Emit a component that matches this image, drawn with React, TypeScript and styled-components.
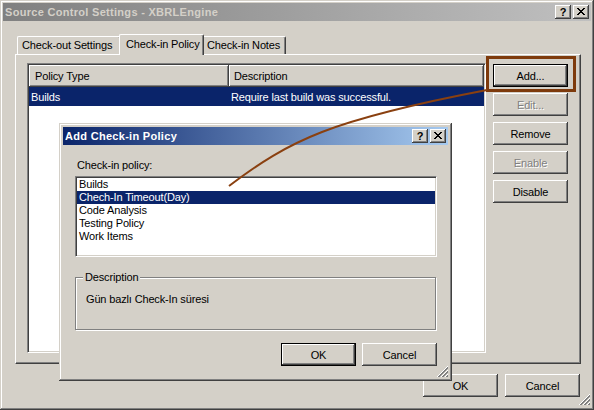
import React from "react";
import styled, { createGlobalStyle, css } from "styled-components";

const Global = createGlobalStyle`
  html, body { margin: 0; padding: 0; background: #d4d0c8; }
  body { font-family: "Liberation Sans", Arial, sans-serif; font-size: 11px; letter-spacing: -0.15px; color: #000; }
  * { box-sizing: border-box; }
`;

const raised = css`
  background: #d4d0c8;
  box-shadow: inset -1px -1px #404040, inset 1px 1px #ffffff, inset -2px -2px #808080;
`;

const sunken = css`
  border: 1px solid;
  border-color: #808080 #ffffff #ffffff #808080;
  box-shadow: inset 1px 1px #404040, inset -1px -1px #d4d0c8;
  background: #ffffff;
`;

const Root = styled.div`
  position: relative;
  width: 594px;
  height: 410px;
  overflow: hidden;
`;

const Window = styled.div`
  width: 594px;
  height: 410px;
  padding: 3px;
  background: #d4d0c8;
  display: flex;
  flex-direction: column;
  box-shadow: inset -1px -1px #404040, inset 1px 1px #d4d0c8, inset -2px -2px #808080, inset 2px 2px #ffffff;
`;

const TitleBar = styled.div<{ $active?: boolean }>`
  height: 18px;
  flex: none;
  display: flex;
  align-items: center;
  padding: 0 2px 0 2px;
  font-weight: bold;
  font-size: 11px;
  letter-spacing: 0.3px;
  color: ${(p) => (p.$active ? "#ffffff" : "#d4d0c8")};
  background: ${(p) =>
    p.$active
      ? "linear-gradient(to right, #0a246a, #a6caf0)"
      : "linear-gradient(to right, #808080, #c0c0c0)"};
`;

const TitleText = styled.div`
  flex: 1;
  white-space: nowrap;
  overflow: hidden;
`;

const CaptionButtons = styled.div`
  display: flex;
  gap: 2px;
`;

const CaptionButton = styled.div`
  ${raised};
  width: 16px;
  height: 14px;
  display: flex;
  align-items: center;
  justify-content: center;
  color: #000;
  font-weight: bold;
  font-size: 11px;
  letter-spacing: 0;
  line-height: 14px;
  padding-bottom: 1px;
`;

const Body = styled.div`
  flex: 1;
  display: flex;
  flex-direction: column;
  padding: 13px 10px 0 12px;
`;

const TabStrip = styled.div`
  display: flex;
  align-items: flex-end;
  height: 21px;
  padding-left: 2px;
  position: relative;
  z-index: 1;
  margin-bottom: -1px;
`;

const Tab = styled.div<{ $selected?: boolean; $width: number }>`
  background: #d4d0c8;
  width: ${(p) => p.$width}px;
  height: ${(p) => (p.$selected ? "21px" : "18px")};
  margin: ${(p) => (p.$selected ? "0 -2px" : "0 0 1px 0")};
  position: relative;
  z-index: ${(p) => (p.$selected ? 2 : 1)};
  padding: ${(p) => (p.$selected ? "2px 0 0 6px" : "1px 0 0 4px")};
  border-top: 1px solid #ffffff;
  border-left: 1px solid #ffffff;
  border-right: 1px solid #404040;
  border-top-left-radius: 2px;
  border-top-right-radius: 2px;
  box-shadow: inset -1px 0 #808080;
  white-space: nowrap;
  overflow: hidden;
  line-height: 14px;
`;

const TabPanel = styled.div`
  height: 310px;
  flex: none;
  border: 1px solid;
  border-color: #ffffff #404040 #404040 #ffffff;
  box-shadow: inset -1px -1px #808080;
  display: flex;
  gap: 7px;
  padding: 8px 12px 10px 11px;
`;

const ListView = styled.div`
  ${sunken};
  flex: 1;
  padding: 1px;
  display: flex;
  flex-direction: column;
`;

const ListRow = styled.div<{ $header?: boolean; $selected?: boolean }>`
  display: grid;
  grid-template-columns: 200px 1fr;
  height: ${(p) => (p.$header ? "22px" : "19px")};
  background: ${(p) => (p.$selected ? "#0a246a" : "transparent")};
  color: ${(p) => (p.$selected ? "#ffffff" : "#000000")};
`;

const HeaderCell = styled.div<{ $pad: number }>`
  ${raised};
  display: flex;
  align-items: center;
  padding-left: ${(p) => p.$pad}px;
  white-space: nowrap;
  overflow: hidden;
`;

const Cell = styled.div`
  display: flex;
  align-items: center;
  padding-left: 2px;
  white-space: nowrap;
  overflow: hidden;
`;

const ButtonColumn = styled.div`
  width: 75px;
  flex: none;
  display: flex;
  flex-direction: column;
  gap: 6px;
  padding-top: 1px;
`;

const Button = styled.button<{ $default?: boolean }>`
  width: 75px;
  height: 23px;
  flex: none;
  border: none;
  padding: 0;
  font-family: "Liberation Sans", Arial, sans-serif;
  font-size: 11px;
  letter-spacing: -0.15px;
  color: #000;
  background: #d4d0c8;
  box-shadow: ${(p) =>
    p.$default
      ? "inset 0 0 0 1px #000000, inset -2px -2px #404040, inset 2px 2px #ffffff, inset -3px -3px #808080"
      : "inset -1px -1px #404040, inset 1px 1px #ffffff, inset -2px -2px #808080"};
  &:disabled {
    color: #808080;
    text-shadow: 1px 1px #ffffff;
  }
`;

const Annotated = styled.div`
  position: relative;
  display: flex;
`;

const Highlight = styled.div`
  position: absolute;
  left: -7px;
  top: -8px;
  right: -8px;
  bottom: -5px;
  border: 3px solid #7e3a0c;
  pointer-events: none;
`;

const Footer = styled.div`
  display: flex;
  justify-content: flex-end;
  gap: 7px;
  margin-top: 10px;
  padding-right: 1px;
`;

const GripBox = styled.div<{ $right: number; $bottom: number }>`
  position: absolute;
  right: ${(p) => p.$right}px;
  bottom: ${(p) => p.$bottom}px;
  width: 13px;
  height: 13px;
`;

const Dialog = styled.div`
  position: absolute;
  left: 59px;
  top: 123px;
  width: 393px;
  height: 258px;
  padding: 4px;
  background: #d4d0c8;
  display: flex;
  flex-direction: column;
  box-shadow: inset -1px -1px #404040, inset 1px 1px #d4d0c8, inset -2px -2px #808080, inset 2px 2px #ffffff;
  z-index: 5;
`;

const DialogBody = styled.div`
  flex: 1;
  display: flex;
  flex-direction: column;
  padding: 13px 11px 0 12px;
`;

const Label = styled.div`
  line-height: 14px;
  padding-left: 2px;
`;

const ListBox = styled.div`
  ${sunken};
  margin-top: 4px;
  height: 81px;
  padding: 1px;
`;

const ListItem = styled.div<{ $selected?: boolean }>`
  height: 13px;
  line-height: 13px;
  padding-left: 2px;
  white-space: nowrap;
  background: ${(p) => (p.$selected ? "#0a246a" : "transparent")};
  color: ${(p) => (p.$selected ? "#ffffff" : "#000000")};
`;

const GroupBox = styled.div`
  position: relative;
  margin-top: 20px;
  margin-right: 1px;
  height: 53px;
  border: 1px solid #808080;
  box-shadow: inset 1px 1px #ffffff, 1px 1px #ffffff;
  padding: 15px 10px 0 10px;
  line-height: 13px;
`;

const Legend = styled.div`
  position: absolute;
  left: 7px;
  top: -7px;
  padding: 0 2px;
  line-height: 13px;
  background: #d4d0c8;
`;

const DialogFooter = styled.div`
  display: flex;
  justify-content: flex-end;
  gap: 6px;
  margin-top: 13px;
`;

const Overlay = styled.svg`
  position: absolute;
  left: 0;
  top: 0;
  width: 594px;
  height: 410px;
  pointer-events: none;
  z-index: 10;
`;

const CloseGlyph = () => (
  <svg width="8" height="7" viewBox="0 0 8 7" shapeRendering="crispEdges">
    <path d="M0 0h2v1h-2zM6 0h2v1h-2zM1 1h2v1h-2zM5 1h2v1h-2zM2 2h4v1h-4zM3 3h2v1h-2zM2 4h4v1h-4zM1 5h2v1h-2zM5 5h2v1h-2zM0 6h2v1h-2zM6 6h2v1h-2z" fill="#000" />
  </svg>
);

const Grip = ({ right, bottom }: { right: number; bottom: number }) => (
  <GripBox $right={right} $bottom={bottom}>
    <svg width="13" height="13" viewBox="0 0 13 13" shapeRendering="crispEdges">
      <g strokeWidth="1">
        <path d="M12 1L1 12" stroke="#ffffff" />
        <path d="M12 2L2 12M12 3L3 12" stroke="#808080" />
        <path d="M12 5L5 12" stroke="#ffffff" />
        <path d="M12 6L6 12M12 7L7 12" stroke="#808080" />
        <path d="M12 9L9 12" stroke="#ffffff" />
        <path d="M12 10L10 12M12 11L11 12" stroke="#808080" />
      </g>
    </svg>
  </GripBox>
);

const Caption = () => (
  <CaptionButtons>
    <CaptionButton>?</CaptionButton>
    <CaptionButton>
      <CloseGlyph />
    </CaptionButton>
  </CaptionButtons>
);

const policies = ["Builds", "Chech-In Timeout(Day)", "Code Analysis", "Testing Policy", "Work Items"];

const tabs = [
  { label: "Check-out Settings", width: 104 },
  { label: "Check-in Policy", width: 81, selected: true },
  { label: "Check-in Notes", width: 84 },
];

export default function App() {
  return (
    <Root>
      <Global />
      <Window>
        <TitleBar>
          <TitleText>Source Control Settings - XBRLEngine</TitleText>
          <Caption />
        </TitleBar>
        <Body>
          <TabStrip>
            {tabs.map((t) => (
              <Tab key={t.label} $selected={t.selected} $width={t.selected ? t.width + 4 : t.width}>
                {t.label}
              </Tab>
            ))}
          </TabStrip>
          <TabPanel>
            <ListView>
              <ListRow $header>
                <HeaderCell $pad={6}>Policy Type</HeaderCell>
                <HeaderCell $pad={5}>Description</HeaderCell>
              </ListRow>
              <ListRow $selected>
                <Cell>Builds</Cell>
                <Cell>Require last build was successful.</Cell>
              </ListRow>
            </ListView>
            <ButtonColumn>
              <Annotated>
                <Button $default>Add...</Button>
                <Highlight />
              </Annotated>
              <Button disabled>Edit...</Button>
              <Button>Remove</Button>
              <Button disabled>Enable</Button>
              <Button>Disable</Button>
            </ButtonColumn>
          </TabPanel>
          <Footer>
            <Button>OK</Button>
            <Button>Cancel</Button>
          </Footer>
        </Body>
        <Grip right={3} bottom={4} />
      </Window>

      <Dialog>
        <TitleBar $active>
          <TitleText>Add Check-in Policy</TitleText>
          <Caption />
        </TitleBar>
        <DialogBody>
          <Label>Check-in policy:</Label>
          <ListBox>
            {policies.map((p, i) => (
              <ListItem key={p} $selected={i === 1}>
                {p}
              </ListItem>
            ))}
          </ListBox>
          <GroupBox>
            <Legend>Description</Legend>
            Gün bazlı Check-In süresi
          </GroupBox>
          <DialogFooter>
            <Button $default>OK</Button>
            <Button>Cancel</Button>
          </DialogFooter>
        </DialogBody>
        <Grip right={3} bottom={3} />
      </Dialog>

      <Overlay viewBox="0 0 594 410">
        <path d="M229 186 C 290 140 330 120 487 90" stroke="#8a4010" strokeWidth="2" fill="none" />
      </Overlay>
    </Root>
  );
}
